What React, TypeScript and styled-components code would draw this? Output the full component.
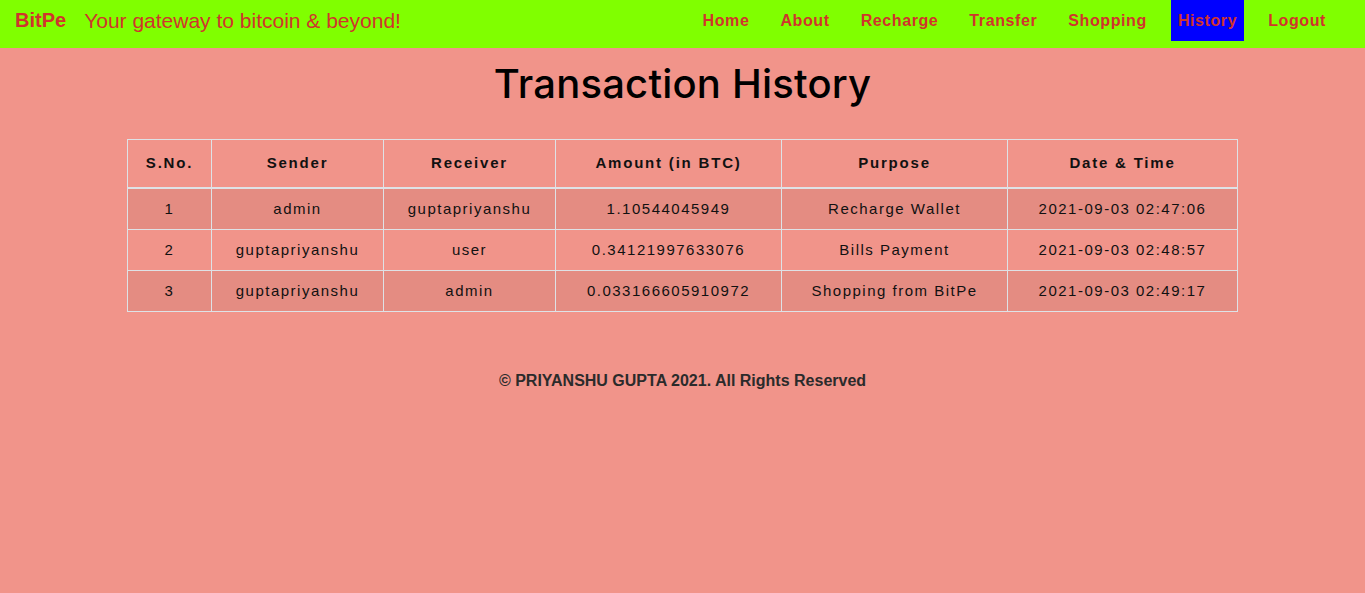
import React from 'react';
import styled, { createGlobalStyle } from 'styled-components';

const GlobalStyle = createGlobalStyle`
  body {
    margin: 0;
    background-color: #f1948a;
    font-family: 'Liberation Sans', Arial, sans-serif;
  }
`;

const Navbar = styled.nav`
  height: 48px;
  background-color: #80ff00;
  display: flex;
  align-items: flex-start;
  padding: 0 15px;
  box-sizing: border-box;
`;

const Brand = styled.a`
  font-weight: bold;
  font-size: 20px;
  color: #d0342c;
  line-height: 41px;
  margin-right: 18px;
`;

const Tagline = styled.span`
  font-size: 21px;
  color: #d0342c;
  line-height: 41px;
`;

const NavList = styled.ul`
  list-style: none;
  margin: 0 17px 0 auto;
  padding: 0;
  display: flex;
  gap: 17px;
`;

const NavLink = styled.a<{ $active?: boolean }>`
  display: block;
  font-size: 16px;
  font-weight: bold;
  color: #d0342c;
  line-height: 41px;
  padding: 0 7px;
  background-color: ${(p) => (p.$active ? '#0000ff' : 'transparent')};
  letter-spacing: 0.6px;
`;

const Title = styled.h1`
  font-family: 'Inter', 'Lato', sans-serif;
  font-weight: 500;
  font-size: 40px;
  text-align: center;
  margin: 11px 0 0;
  color: #000;
  letter-spacing: 0.2px;
`;

const Container = styled.div`
  width: 1110px;
  margin: 31px 0 0 127px;
`;

const Table = styled.table`
  width: 100%;
  table-layout: fixed;
  border-collapse: collapse;
  color: #111;
  letter-spacing: 1.5px;
  font-size: 15px;
`;

const Th = styled.th<{ $w: number }>`
  box-sizing: border-box;
  width: ${(p) => p.$w}px;
  border: 1px solid #dee2e6;
  border-bottom-width: 2px;
  padding: 11px 4px 12px;
  font-weight: bold;
  line-height: 24px;
  letter-spacing: 1.8px;
`;

const Tr = styled.tr<{ $odd: boolean }>`
  background-color: ${(p) => (p.$odd ? 'rgba(0,0,0,0.05)' : 'transparent')};
`;

const Td = styled.td`
  border: 1px solid #dee2e6;
  padding: 8px 4px;
  text-align: center;
  line-height: 24px;
`;

const Footer = styled.footer`
  text-align: center;
  font-weight: bold;
  font-size: 16px;
  color: #2b2b2b;
  margin-top: 60px;
`;

const links = ['Home', 'About', 'Recharge', 'Transfer', 'Shopping', 'History', 'Logout'];

const columns: [string, number][] = [
  ['S.No.', 84],
  ['Sender', 172],
  ['Receiver', 172],
  ['Amount (in BTC)', 226],
  ['Purpose', 226],
  ['Date & Time', 230],
];

const rows = [
  ['1', 'admin', 'guptapriyanshu', '1.10544045949', 'Recharge Wallet', '2021-09-03 02:47:06'],
  ['2', 'guptapriyanshu', 'user', '0.34121997633076', 'Bills Payment', '2021-09-03 02:48:57'],
  ['3', 'guptapriyanshu', 'admin', '0.033166605910972', 'Shopping from BitPe', '2021-09-03 02:49:17'],
];

const App: React.FC = () => {
  return (
    <>
      <GlobalStyle />
      <Navbar>
        <Brand>BitPe</Brand>
        <Tagline>Your gateway to bitcoin &amp; beyond!</Tagline>
        <NavList>
          {links.map((l) => (
            <li key={l}>
              <NavLink $active={l === 'History'}>{l}</NavLink>
            </li>
          ))}
        </NavList>
      </Navbar>
      <Title>Transaction History</Title>
      <Container>
        <Table>
          <thead>
            <tr>
              {columns.map(([c, w]) => (
                <Th key={c} $w={w}>
                  {c}
                </Th>
              ))}
            </tr>
          </thead>
          <tbody>
            {rows.map((r, i) => (
              <Tr key={r[0]} $odd={i % 2 === 0}>
                {r.map((cell, j) => (
                  <Td key={j}>{cell}</Td>
                ))}
              </Tr>
            ))}
          </tbody>
        </Table>
      </Container>
      <Footer>© PRIYANSHU GUPTA 2021. All Rights Reserved</Footer>
    </>
  );
};

export default App;
